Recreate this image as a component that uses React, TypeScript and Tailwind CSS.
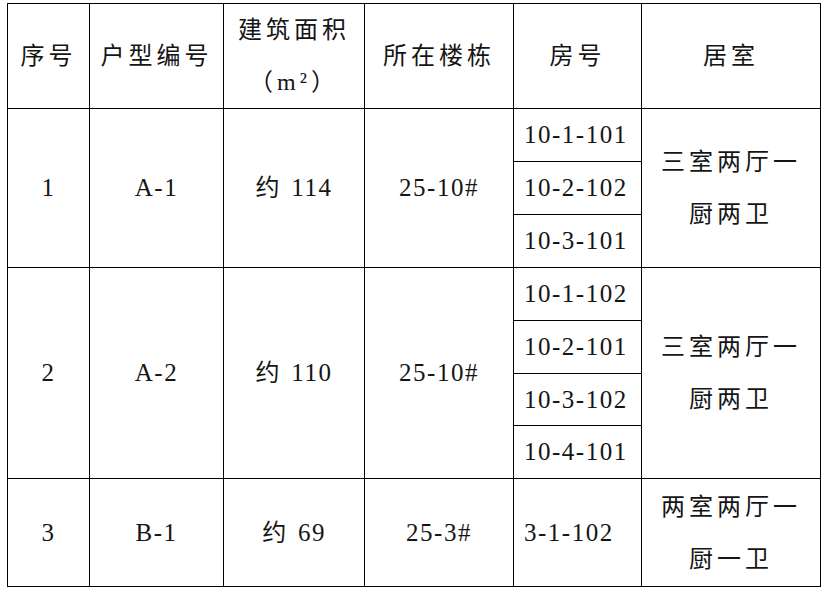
import type { ReactNode } from "react";

const cell = "border border-black p-0 text-center align-middle";
const zh = "text-[24px] tracking-[4px]";
const num = "text-[25px] tracking-[1.5px]";

function Two({ a, b }: { a: ReactNode; b: ReactNode }) {
  return (
    <div className="flex flex-col items-center leading-[52px]">
      <span>{a}</span>
      <span>{b}</span>
    </div>
  );
}

function Room({ children, h }: { children: string; h: string }) {
  return (
    <td className={`${cell} ${h} pl-[10px] text-left ${num}`}>{children}</td>
  );
}

export default function App() {
  return (
    <div className="min-h-[591px] w-[825px] bg-white pt-[3px] pl-[7px] font-[family-name:'Liberation_Serif','Noto_Sans_CJK_SC',serif] text-[24px] text-[#151515]">
      <table className="w-[813px] table-fixed border-collapse">
        <colgroup>
          <col className="w-[82px]" />
          <col className="w-[134px]" />
          <col className="w-[141px]" />
          <col className="w-[149px]" />
          <col className="w-[128px]" />
          <col className="w-[179px]" />
        </colgroup>
        <tbody>
          <tr className="h-[104px]">
            <td className={`${cell} ${zh}`}>序号</td>
            <td className={`${cell} ${zh}`}>户型编号</td>
            <td className={`${cell} ${zh}`}>
              <Two a="建筑面积" b="（m²）" />
            </td>
            <td className={`${cell} ${zh}`}>所在楼栋</td>
            <td className={`${cell} ${zh}`}>房号</td>
            <td className={`${cell} ${zh}`}>居室</td>
          </tr>

          <tr>
            <td rowSpan={3} className={`${cell} ${num}`}>1</td>
            <td rowSpan={3} className={`${cell} ${num}`}>A-1</td>
            <td rowSpan={3} className={`${cell} ${num}`}>
              <span className={zh}>约</span> 114
            </td>
            <td rowSpan={3} className={`${cell} ${num}`}>25-10#</td>
            <Room h="h-[53px]">10-1-101</Room>
            <td rowSpan={3} className={`${cell} ${zh}`}>
              <Two a="三室两厅一" b="厨两卫" />
            </td>
          </tr>
          <tr>
            <Room h="h-[53px]">10-2-102</Room>
          </tr>
          <tr>
            <Room h="h-[53px]">10-3-101</Room>
          </tr>

          <tr>
            <td rowSpan={4} className={`${cell} ${num}`}>2</td>
            <td rowSpan={4} className={`${cell} ${num}`}>A-2</td>
            <td rowSpan={4} className={`${cell} ${num}`}>
              <span className={zh}>约</span> 110
            </td>
            <td rowSpan={4} className={`${cell} ${num}`}>25-10#</td>
            <Room h="h-[53px]">10-1-102</Room>
            <td rowSpan={4} className={`${cell} ${zh}`}>
              <Two a="三室两厅一" b="厨两卫" />
            </td>
          </tr>
          <tr>
            <Room h="h-[53px]">10-2-101</Room>
          </tr>
          <tr>
            <Room h="h-[52px]">10-3-102</Room>
          </tr>
          <tr>
            <Room h="h-[53px]">10-4-101</Room>
          </tr>

          <tr className="h-[108px]">
            <td className={`${cell} ${num}`}>3</td>
            <td className={`${cell} ${num}`}>B-1</td>
            <td className={`${cell} ${num}`}>
              <span className={zh}>约</span> 69
            </td>
            <td className={`${cell} ${num}`}>25-3#</td>
            <Room h="h-[108px]">3-1-102</Room>
            <td className={`${cell} ${zh}`}>
              <Two a="两室两厅一" b="厨一卫" />
            </td>
          </tr>
        </tbody>
      </table>
    </div>
  );
}
